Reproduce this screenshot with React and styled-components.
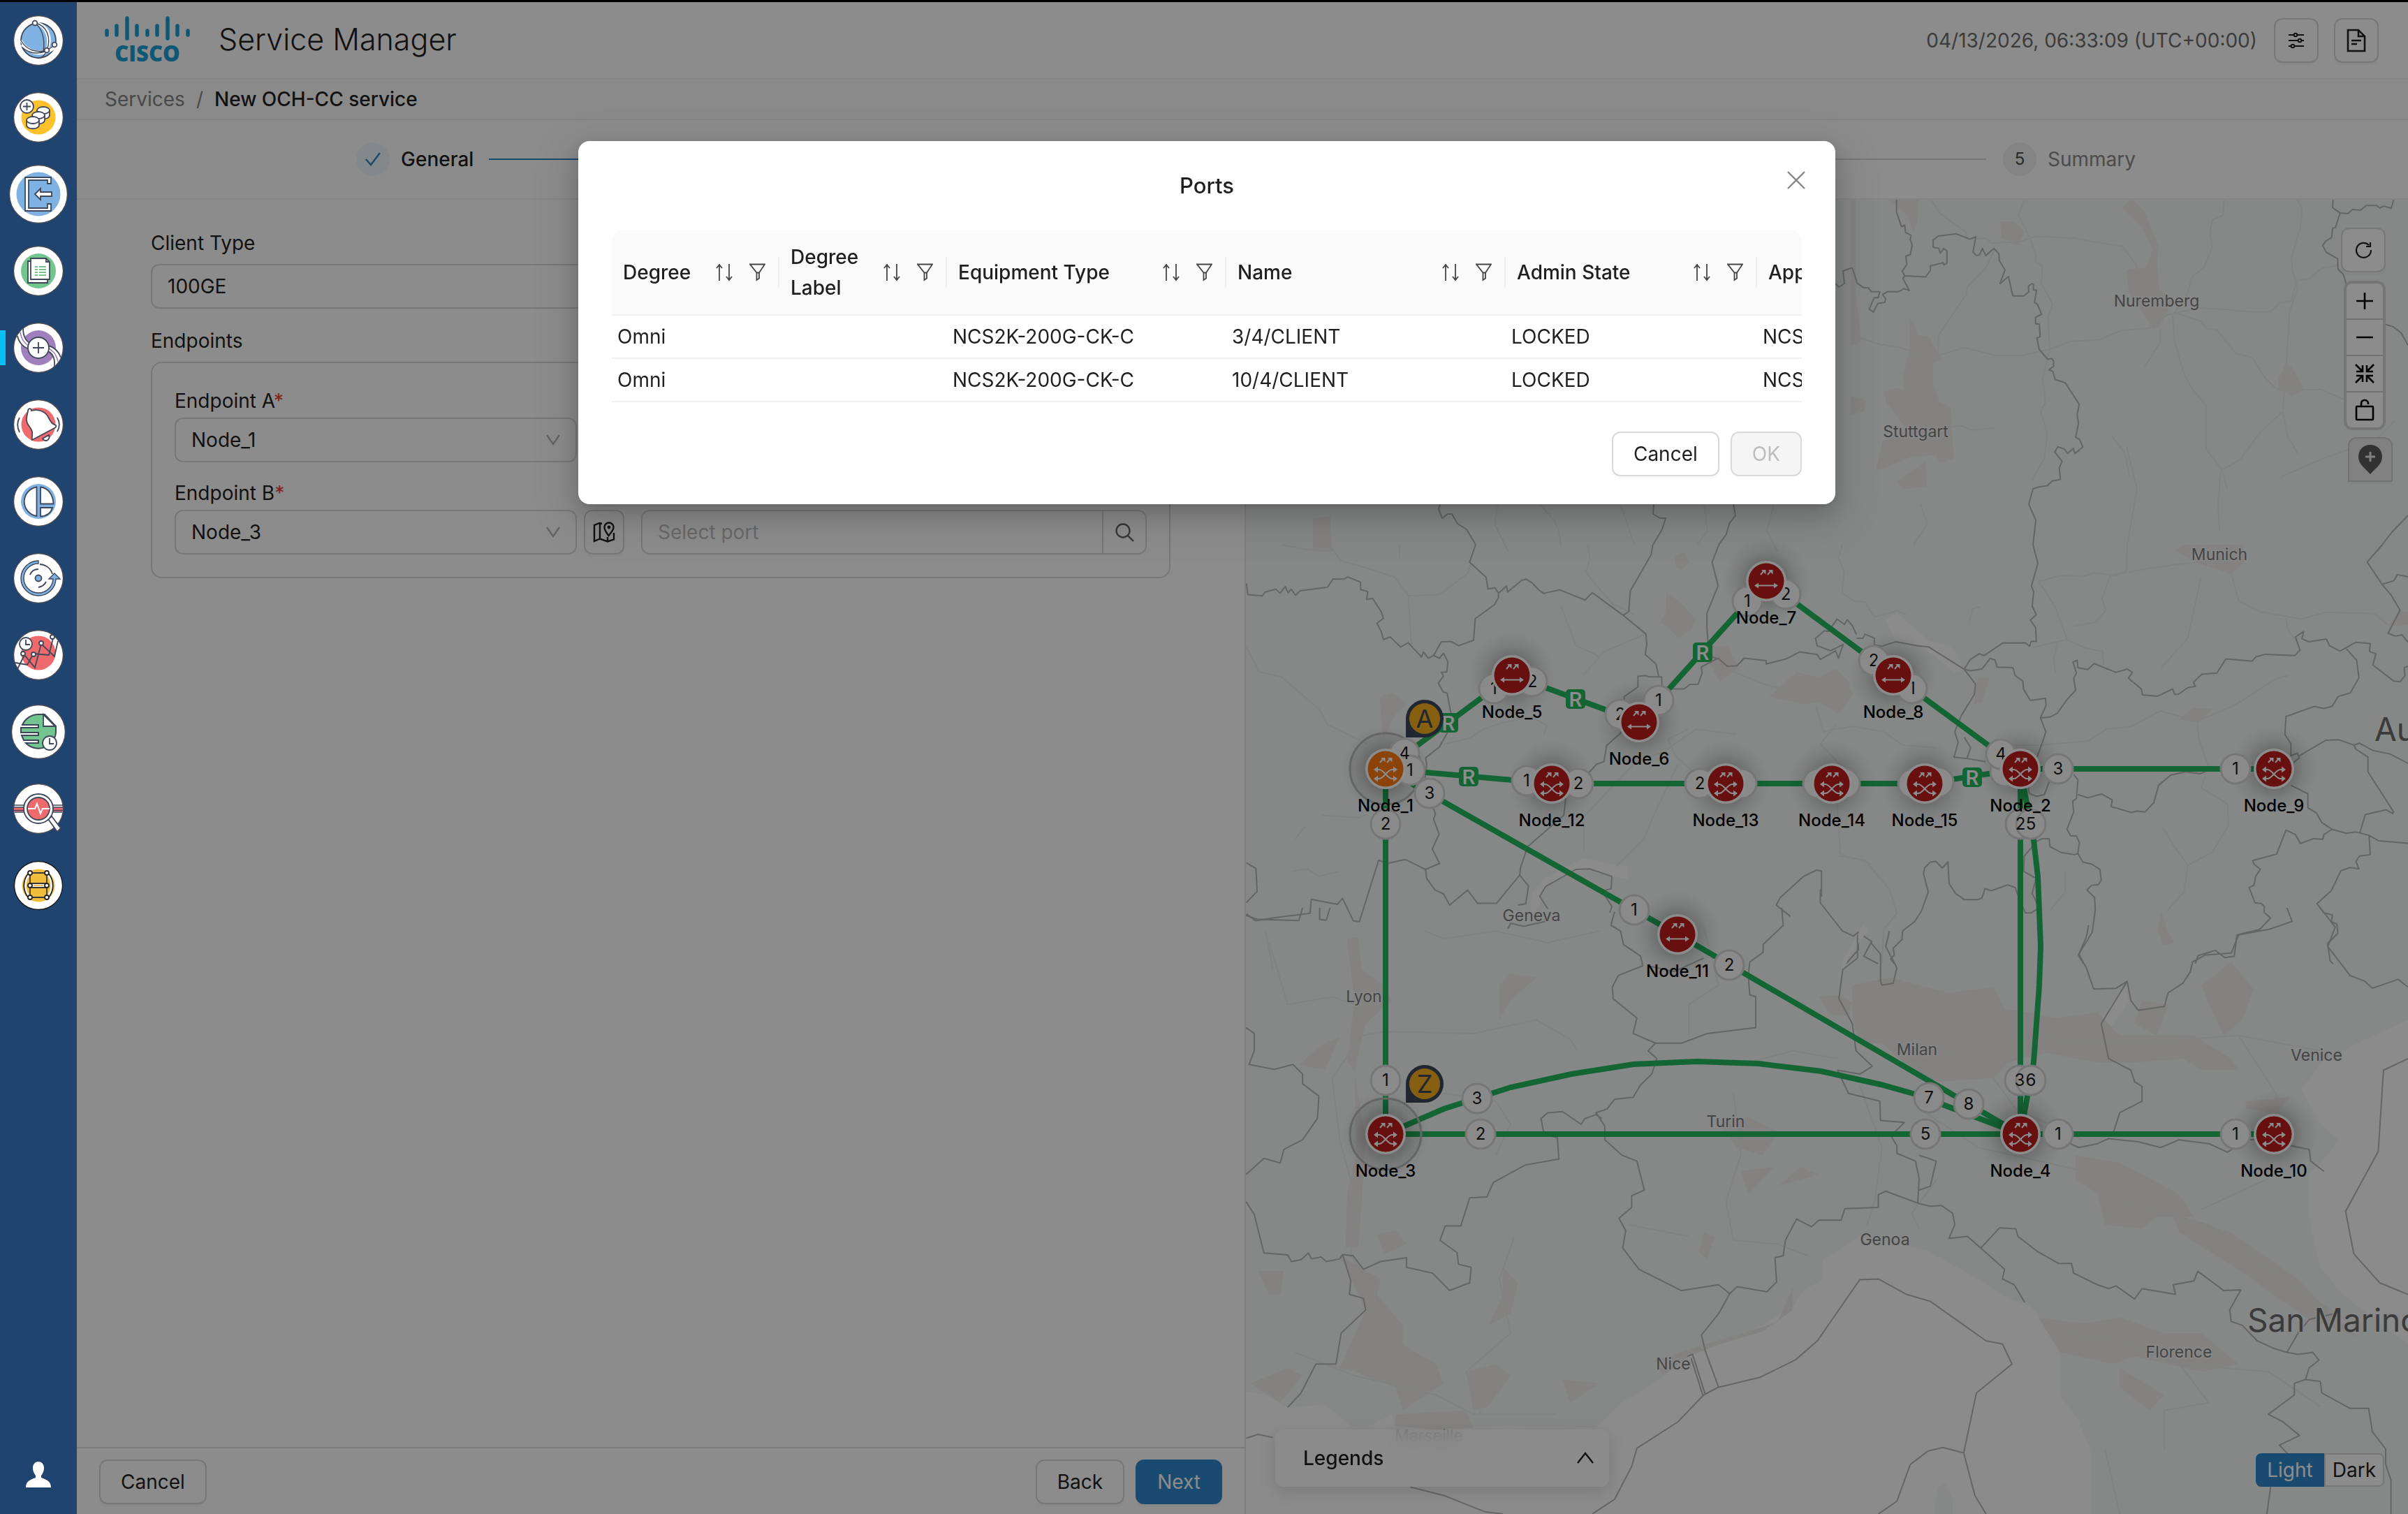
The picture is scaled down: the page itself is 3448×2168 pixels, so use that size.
import React from "react";
import styled, { createGlobalStyle } from "styled-components";

const FONT = `Inter, "Liberation Sans", sans-serif`;
const TEXT = "#1f1f1f";
const LINE = "#d9d9d9";
const BLUE = "#2f87cc";

const Global = createGlobalStyle`
  *, *::before, *::after { box-sizing: border-box; }
  body { margin: 0; background: #000; font-family: ${FONT}; font-size: 28px; line-height: 44px; color: ${TEXT}; }
  button, input, select { font: inherit; color: inherit; margin: 0; }
  svg { display: block; }
`;

/* ---------- page frame ---------- */
const Page = styled.div`
  display: flex;
  min-height: 100vh;
  border-top: 3px solid #000;
`;
const Sidebar = styled.nav`
  flex: 0 0 110px;
  display: flex;
  flex-direction: column;
  background: #1f4470;
`;
const NavItem = styled.a`
  display: flex;
  align-items: center;
  justify-content: center;
  height: 110px;
  background: linear-gradient(#08bff5, #08bff5) no-repeat left center / ${(p) => (p.$active ? "8px 50px" : "0 0")};
`;
const NavSpacer = styled.div`
  flex: 1;
`;
const UserLink = styled(NavItem)`
  height: 112px;
`;
const Main = styled.div`
  position: relative;
  flex: 1;
  min-width: 0;
  display: flex;
  flex-direction: column;
  background: #fff;
`;
const Mask = styled.div`
  position: absolute;
  inset: 0;
  background: rgba(0, 0, 0, 0.45);
`;

/* ---------- header ---------- */
const Header = styled.header`
  display: flex;
  align-items: center;
  height: 111px;
  padding: 0 42px 0 40px;
  border-bottom: 2px solid #f0f0f0;
`;
const Title = styled.h1`
  flex: 1;
  margin: 0 0 4px 40px;
  font-size: 43px;
  line-height: 56px;
  font-weight: 300;
`;
const Clock = styled.time`
  margin-right: 24px;
  color: #6e6e6e;
`;
const SquareButton = styled.button`
  display: flex;
  align-items: center;
  justify-content: center;
  flex: none;
  width: ${(p) => p.$width || 64}px;
  height: 64px;
  padding: 0;
  border: 2px solid ${LINE};
  border-radius: 12px;
  background: #fff;
  box-shadow: 0 4px 0 rgba(0, 0, 0, 0.02);
`;
const HeaderTools = styled.div`
  display: flex;
  gap: 22px;
`;
const Breadcrumb = styled.nav`
  display: flex;
  align-items: center;
  gap: 16px;
  height: 58px;
  padding: 0 40px;
  border-bottom: 2px solid #f0f0f0;
  background: #fcfcfc;
  color: #858585;
`;
const Crumb = styled.a`
  color: ${(p) => (p.$current ? TEXT : "#858585")};
  font-weight: ${(p) => (p.$current ? 500 : 400)};
  text-decoration: none;
`;

/* ---------- steps ---------- */
const Steps = styled.ol`
  display: flex;
  align-items: center;
  height: 114px;
  margin: 0;
  padding: 0 390px 0 400px;
  list-style: none;
  border-bottom: 2px solid #f0f0f0;
`;
const Step = styled.li`
  display: flex;
  align-items: center;
  gap: 16px;
  color: ${(p) => (p.$done ? TEXT : "#8a8a8a")};
  font-weight: ${(p) => (p.$done ? 500 : 400)};
`;
const StepMark = styled.span`
  display: flex;
  align-items: center;
  justify-content: center;
  width: 48px;
  height: 48px;
  border-radius: 50%;
  font-size: 24px;
  color: #4d4d4d;
  background: ${(p) => (p.$done ? "#eef7fb" : "#f0f0f0")};
`;
const StepLine = styled.li`
  flex: 1;
  height: 2px;
  margin: 0 ${(p) => (p.$done ? 0 : 24)}px 0 ${(p) => (p.$done ? 22 : 0)}px;
  background: ${(p) => (p.$done ? BLUE : LINE)};
`;

/* ---------- form column ---------- */
const Body = styled.div`
  flex: 1;
  display: flex;
`;
const FormColumn = styled.form`
  flex: 0 0 calc(50% + 5px);
  display: flex;
  flex-direction: column;
  border-right: 2px solid #e6e6e6;
`;
const Fields = styled.div`
  flex: 1;
  display: flex;
  flex-direction: column;
  gap: 24px;
  padding: 40px 106px;
`;
const Field = styled.div`
  display: flex;
  flex-direction: column;
  gap: ${(p) => p.$gap}px;
`;
const Required = styled.span`
  color: #e8453c;
`;
const Box = styled.div`
  display: flex;
  flex-direction: column;
  gap: 22px;
  padding: 32px;
  border: 2px solid ${LINE};
  border-radius: 16px;
`;
const EndpointRow = styled.div`
  display: flex;
  align-items: center;
`;
const SelectWrap = styled.div`
  position: relative;
  flex: 1 1 ${(p) => p.$basis || "auto"};
  max-width: ${(p) => p.$basis || "none"};
  margin-right: ${(p) => (p.$basis ? 10 : 0)}px;
`;
const Select = styled.select`
  appearance: none;
  display: block;
  width: 100%;
  height: 64px;
  padding: 0 60px 0 22px;
  border: 2px solid ${LINE};
  border-radius: 12px;
  background: #fff;
`;
const SelectArrow = styled.svg`
  position: absolute;
  right: 24px;
  top: 24px;
  pointer-events: none;
`;
const Search = styled.div`
  flex: 1;
  display: flex;
  height: 64px;
  margin-left: 24px;
  border: 2px solid ${LINE};
  border-radius: 12px;
`;
const SearchInput = styled.input`
  flex: 1;
  min-width: 0;
  padding: 0 22px;
  border: 0;
  background: transparent;
  &::placeholder { color: #bfbfbf; opacity: 1; }
`;
const SearchButton = styled.button`
  display: flex;
  align-items: center;
  justify-content: center;
  width: 62px;
  padding: 0;
  border: 0;
  border-left: 2px solid ${LINE};
  background: transparent;
`;
const FormFooter = styled.footer`
  display: flex;
  gap: 16px;
  height: 96px;
  padding: 16px 32px 0;
  border-top: 2px solid #e0e0e0;
`;
const FooterGap = styled.div`
  flex: 1;
`;
const Button = styled.button`
  height: 64px;
  padding: 0 29px;
  border: 2px solid ${(p) => (p.$primary ? BLUE : LINE)};
  border-radius: 12px;
  background: ${(p) => (p.$primary ? BLUE : "#fff")};
  color: ${(p) => (p.$primary ? "#fff" : TEXT)};
  box-shadow: 0 4px 0 rgba(0, 0, 0, 0.02);
  &:disabled { background: #f5f5f5; color: #bdbdbd; box-shadow: none; }
`;

/* ---------- map ---------- */
const MapArea = styled.section`
  position: relative;
  flex: 1;
  overflow: hidden;
  background: #f4f7f6;
`;
const MapCanvas = styled.svg`
  position: absolute;
  inset: 0;
  width: 100%;
  height: 100%;
  font-family: ${FONT};
`;
const MapTools = styled.div`
  position: absolute;
  top: 40px;
  right: 22px;
  display: flex;
  flex-direction: column;
  align-items: flex-end;
`;
const ToolRow = styled.div`
  padding-right: 10px;
`;
const ToolGroup = styled.div`
  display: flex;
  flex-direction: column;
  gap: 2px;
  margin: 12px 10px 10px 0;
  border: 4px solid #d6d6d6;
  border-radius: 12px;
  background: #d0d0d0;
  overflow: hidden;
`;
const ToolButton = styled.button`
  display: flex;
  align-items: center;
  justify-content: center;
  width: 52px;
  height: 50px;
  padding: 0;
  border: 0;
  background: #fff;
`;
const PinButton = styled(SquareButton)`
  background: #ececec;
  border-radius: 12px 12px 0 0;
  border-color: #cfcfcf;
`;
const Legend = styled.button`
  position: absolute;
  left: 42px;
  bottom: 39px;
  display: flex;
  align-items: center;
  justify-content: space-between;
  width: 478px;
  height: 82px;
  padding: 0 22px 0 40px;
  border: 0;
  border-radius: 12px;
  font-weight: 500;
  background: rgba(255, 255, 255, 0.6);
  backdrop-filter: blur(14px);
  box-shadow: 0 6px 24px rgba(0, 0, 0, 0.14);
`;
const ThemeSwitch = styled.div`
  position: absolute;
  right: 34px;
  bottom: 39px;
  display: flex;
`;
const ThemeButton = styled.button`
  height: 48px;
  padding: 0 ${(p) => (p.$on ? 14 : 10)}px;
  border: 2px solid ${(p) => (p.$on ? BLUE : LINE)};
  border-radius: ${(p) => (p.$on ? "8px 0 0 8px" : "0 8px 8px 0")};
  background: ${(p) => (p.$on ? BLUE : "#fff")};
  color: ${(p) => (p.$on ? "#fff" : TEXT)};
  line-height: 40px;
`;

/* ---------- dialog ---------- */
const ModalLayer = styled.div`
  position: fixed;
  inset: 0;
  display: flex;
  align-items: flex-start;
  justify-content: center;
  padding: 202px 0 0 8px;
`;
const Modal = styled.section`
  position: relative;
  width: 1800px;
  padding: 36px 48px 40px;
  border-radius: 16px;
  background: #fff;
  box-shadow: 0 12px 32px rgba(0, 0, 0, 0.16), 0 6px 12px -8px rgba(0, 0, 0, 0.24), 0 18px 56px 16px rgba(0, 0, 0, 0.1);
`;
const ModalTitle = styled.h2`
  margin: 6px 0 42px;
  font-size: 31px;
  line-height: 44px;
  font-weight: 500;
  text-align: center;
`;
const CloseButton = styled.button`
  position: absolute;
  top: 24px;
  right: 24px;
  display: flex;
  align-items: center;
  justify-content: center;
  width: 64px;
  height: 64px;
  padding: 0;
  border: 0;
  background: none;
`;
const TableWrap = styled.div`
  overflow: hidden;
  border-radius: 16px 16px 0 0;
`;
const Table = styled.table`
  width: 1900px;
  table-layout: fixed;
  border-collapse: separate;
  border-spacing: 0;
`;
const Th = styled.th`
  width: ${(p) => p.$width}px;
  height: 122px;
  padding: 0;
  border-bottom: 2px solid #f0f0f0;
  background: #fafafa;
  font-weight: 500;
  text-align: left;
`;
const HeadCell = styled.div`
  display: flex;
  align-items: center;
  justify-content: space-between;
  padding: 0 20px 0 16px;
  background: linear-gradient(#eeeeee, #eeeeee) no-repeat right center / 2px 44px;
`;
const HeadTools = styled.span`
  display: flex;
  gap: 24px;
`;
const IconButton = styled.button`
  padding: 0;
  border: 0;
  background: none;
`;
const Td = styled.td`
  height: 62px;
  padding: 0 8px;
  border-bottom: 2px solid #f0f0f0;
`;
const ModalFooter = styled.div`
  display: flex;
  justify-content: flex-end;
  gap: 16px;
  margin-top: 42px;
`;

/* ---------- icons ---------- */
const S = "#3f4759";
const Disc = ({ r = 36, fill = "#fff", stroke = "#4b4b55", children }) => (
  <svg width={r * 2 + 2} height={r * 2 + 2} viewBox={`${36 - r - 1} ${36 - r - 1} ${r * 2 + 2} ${r * 2 + 2}`} fill="none" stroke={S} strokeWidth="1.8" overflow="visible">
    <circle cx="36" cy="36" r={r - 0.5} fill={fill} stroke={stroke} strokeWidth="1.4" />
    {children}
  </svg>
);
const Globe = () => (
  <Disc>
    <circle cx="36" cy="36" r="25" fill="#7fb2e2" />
    <path d="M31 11C46 14 54 32 48 50M31 11C50 12 57 34 48 50M11 36c8 14 22 19 36 14 6-2 10-4 12-7M12 42c10 12 24 15 35 11 7-2 12-6 13-8" stroke="#fff" strokeWidth="3.4" />
    <path d="M31 11C48 14 55 32 48 50 45 58 41 60 38 61M31 11C41 18 46 34 43 52M11 36c8 14 22 18 37 14l11-7M13 46c10 9 22 10 35 5" strokeWidth="1.4" />
    <circle cx="31" cy="11" r="3.4" fill="#fff" /><circle cx="59" cy="42" r="3.4" fill="#fff" /><circle cx="48" cy="50" r="3.4" fill="#fff" />
  </Disc>
);
const Coins = () => (
  <Disc>
    <circle cx="36" cy="36" r="24.5" fill="#fdc12b" stroke="none" />
    {[[43, 26], [36, 33], [28, 40]].map(([x, y]) => (
      <g key={x} fill="#fff"><path d={`M${x - 9} ${y}v7c0 7 18 7 18 0v-7`} /><ellipse cx={x} cy={y} rx="9" ry="5" /></g>
    ))}
    <circle cx="19.500" cy="20.500" r="9.500" fill="#fff" /><path d="M19.500 15v11M14 20.500h11" />
  </Disc>
);
const Login = () => (
  <Disc r={42}>
    <circle cx="36" cy="36" r="31.500" fill="#7fb2e2" stroke="none" />
    <path d="M17 12h37v9h-5v-5H22v40h27v-6h5v10H17z" fill="#fff" /><path d="M31 36l8-8v5h16v6H39v5z" fill="#fff" />
  </Disc>
);
const Docs = () => (
  <Disc>
    <circle cx="36" cy="36" r="25" fill="#74c48f" stroke="none" />
    <path d="M21 22h28v31H21z" fill="#fff" /><path d="M25 18h22l5 5v25H25z" fill="#fff" /><path d="M47 18v5h5" />
    <path d="M31 30h4M37 30h10M31 34h4M37 34h10M31 38h4M37 38h10M31 42h4M37 42h10" stroke="#74c48f" strokeWidth="2.200" />
  </Disc>
);
const Service = () => (
  <Disc>
    <circle cx="36" cy="36" r="25" fill="#9f80bd" stroke="none" />
    <path d="M6 19C8 29 15 36 24 38L27 30C19 29 14 20 14 8ZM48 33C59 34 66 43 68 50L59 63C60 50 56 42 46 40Z" fill="#fff" stroke="none" />
    <path d="M6 19C8 29 15 36 24 38M27 30C19 29 14 20 14 8M48 33C59 34 66 43 68 50M59 63C60 50 56 42 46 40" />
    <path d="M10 14C12 25 18 32 25 34M47 36C57 38 62 47 64 56" stroke="#9f80bd" strokeWidth="1.600" />
    <circle cx="36" cy="36" r="15" fill="#fff" /><path d="M36 28v16M28 36h16" />
  </Disc>
);
const Bell = () => (
  <Disc>
    <circle cx="36" cy="36" r="24.500" fill="#ef6a6c" stroke="none" />
    <path d="M21 17c0-5 5-5 5-1 12-3 21 2 25 11 3 6 5 8 10 10 1 2 0 3-2 4L27 58c-1-3 1-7 0-12-1-6-8-9-8-17 0-5 1-8 2-12z" fill="#fff" />
    <path d="M42 56l9-5c2 3-1 8-4 8-2 0-4-1-5-3z" fill="#fff" /><path d="M9 26c-4 7-4 13 0 21M63 26c4 7 4 13 0 20" />
  </Disc>
);
const Pie = () => (
  <Disc>
    <circle cx="36" cy="36" r="25" fill="#7fb2e2" stroke="none" />
    <path d="M33.500 15.500a21 21 0 0 0 0 41.500zM39 15.500c10 1 18 10 18.500 24H39zM39 45h17c-2 7-8 12-17 12.500z" fill="#fff" />
  </Disc>
);
const Disk = () => (
  <Disc>
    <path d="M36 11a25 25 0 1 0 25 26h6l-8-8-8 8h6a21 21 0 1 1-21-22z" fill="#7fb2e2" strokeWidth="1.400" />
    <circle cx="36" cy="36" r="4.500" fill="#7fb2e2" /><path d="M24 31c2-5 6-8 12-8M36 49c6-1 9-4 11-8M38 16c10 1 16 7 18 14" />
  </Disc>
);
const Trend = () => (
  <Disc>
    <circle cx="36" cy="33" r="24.500" fill="#ef6a6c" stroke="none" />
    <path d="M3 47l17 3 9-16 22 2L57 12M6 56l10-20 15 18 9-34 19 18 5-22" />
    <circle cx="14" cy="34" r="3" fill="#fff" /><circle cx="29" cy="35" r="3" fill="#fff" /><circle cx="40" cy="19" r="3" fill="#fff" /><circle cx="56" cy="10" r="3" fill="#fff" />
    <circle cx="18" cy="20" r="9" fill="#fff" /><path d="M18 14v7h6" />
  </Disc>
);
const Report = () => (
  <Disc r={39}>
    <path d="M45 11H36A25 25 0 0 0 13 26h23v4H11v7h25v4H12l3 7h21v4H18a25 25 0 0 0 43-15v-9L45 11z" fill="#74c48f" strokeWidth="2" />
    <path d="M43 11v17h17z" fill="#fff" /><circle cx="52" cy="52" r="10" fill="#fff" /><path d="M52 45v8h6" />
  </Disc>
);
const Inspect = () => (
  <Disc>
    <path d="M1 34h70v6H1z" fill="#ef6a6c" stroke="none" /><path d="M1 31h70M1 34h70M1 38.500h70M2 41h68" strokeWidth="1.400" />
    <path d="M50 51l5-4 13 17-5 5z" fill="#fff" /><circle cx="36" cy="36" r="21" fill="#fff" /><circle cx="36" cy="36" r="16" fill="#ef6a6c" />
    <path d="M21 36h10l3-7 5 14 3-7h10" stroke="#fff" strokeWidth="2" />
  </Disc>
);
const Grid = () => (
  <Disc r={35} stroke="#1b1b1b">
    <circle cx="36" cy="36" r="23.500" fill="#f0be3a" stroke="none" />
    <path d="M24 18c-10 10-10 26 0 36M48 18c10 10 10 26 0 36" stroke="#fff" strokeWidth="4" /><path d="M22 18c-9 11-9 25 0 36M50 18c9 11 9 25 0 36" stroke="#222" />
    <path d="M24 33.500h24v5H24z" fill="#fff" stroke="none" /><path d="M24 18h24v35H24zM24 33h24M24 39h24" stroke="#3a3a3a" /><path d="M29 36h14" stroke="#f0be3a" />
    {[18, 36, 53].map((y) => <g key={y} fill="#fff" stroke="#222"><circle cx="24" cy={y} r="3" /><circle cx="48" cy={y} r="3" /></g>)}
  </Disc>
);
const NAV = [
  ["Network", Globe], ["Inventory", Coins], ["Node access", Login], ["Documents", Docs], ["Services", Service], ["Alarms", Bell],
  ["Partitions", Pie], ["Software", Disk], ["Performance", Trend], ["Reports", Report], ["Diagnostics", Inspect], ["Topology", Grid],
];

const BARS = [[3, 18, 29], [17, 11, 29], [32, 0, 34], [46, 11, 29], [61, 18, 29], [75, 11, 29], [90, 0, 34], [104, 11, 29], [119, 18, 29]];
const Logo = () => (
  <svg width="123" height="78" viewBox="0 -4 123 78" role="img" aria-label="Cisco">
    <g stroke="#1ba0d7" strokeWidth="5.500" strokeLinecap="round">
      {BARS.map(([x, a, b]) => <path key={x} d={`M${x} ${a + 3}V${b - 2}`} />)}
    </g>
    <text x="61" y="65" textAnchor="middle" fontFamily="Open Sans, Noto Sans, sans-serif" fontSize="31" fontWeight="800" fill="#1ba0d7">CISCO</text>
  </svg>
);
const ArrowDown = () => (
  <SelectArrow width="20" height="16" viewBox="0 0 20 16" fill="none" stroke="#b5b5b5" strokeWidth="2.400"><path d="M1 1l9 13 9-13" /></SelectArrow>
);
const MapPin = () => (
  <svg width="32" height="32" viewBox="0 0 32 32" fill="none" stroke="#1f1f1f" strokeWidth="2.400">
    <path d="M13 4L9.500 3 2 6v23l8-3.500 11 4 9-3V17M10 3v22M21 23v6" /><path d="M22.500 21c-4-5-6-8-6-12a6 6 0 0 1 13 0c0 4-3 7-7 12z" /><circle cx="23" cy="9" r="1.200" />
  </svg>
);
const Magnifier = () => (
  <svg width="28" height="28" viewBox="0 0 28 28" fill="none" stroke="#666" strokeWidth="2.400"><circle cx="12" cy="12" r="9.500" /><path d="M19 19l8 8" /></svg>
);
const SortIcon = () => (
  <svg width="24" height="26" viewBox="0 0 24 26" fill="none" stroke="#444" strokeWidth="1.800"><path d="M5 25V2M1 7l4-5 4 5M19 1v23M15 19l4 5 4-5" /></svg>
);
const FilterIcon = () => (
  <svg width="23" height="26" viewBox="0 0 23 26" fill="none" stroke="#444" strokeWidth="1.800"><path d="M1 1.500h21l-8 12v8L10.500 24V13.500zM10 13.500h4" /></svg>
);

/* ---------- base map drawing ---------- */
const TILES = [
  {
    at: "translate(0 0)",
    urban: "M1880 742L1905 740 1908 790 1880 790Z",
    roads: "M2145 722L2140 750 2160 790M2205 722L2225 745 2232 760 2235 780M2320 722L2330 750 2340 780M2440 722L2445 760 2430 780M2540 722L2530 760 2545 790M2750 722L2760 750 2740 780M3045 640L3060 700 3046 780M3180 673L3176 720 3178 760",
    border: "M2062 722L2060 729 2065 742 2073 736 2079 736 2087 750 2100 758 2113 780M2368 722L2367 736 2377 742 2385 742 2380 758 2367 780M2482 722L2485 738 2476 750 2472 765 2461 780M2911 700L2905 722 2915 745 2911 780M2628 406L2633 411 2641 406 2639 388 2650 384M3411 780L3425 762 3448 738",
  },
  {
    at: "translate(2650 0) scale(.50893 .44643)",
    urban: "M420 710L458 710 490 742 472 788 425 765ZM765 668L785 640 800 645 830 685 865 785 862 850 870 930 908 960 868 1050 850 1055 800 960 783 940 775 864 830 860 850 800 820 730ZM1238 1172L1278 1250 1240 1270 1202 1250 1203 1215 1220 1175ZM165 1020L180 1040 188 1075 220 1078 235 1110 258 1150 232 1165 232 1230 250 1290 282 1305 285 1370 290 1470 250 1485 240 1460 170 1465 100 1500 70 1510 90 1415 160 1380 100 1290 93 1255 130 1245 150 1250 147 1200 165 1130ZM105 640L190 640 188 710 175 745 160 690ZM0 640L15 640 15 940 30 1100 0 1110ZM130 1545L210 1480 213 1560 150 1568ZM0 1270L44 1285 38 1320 0 1330Z",
    roads: "M225 640L252 685 325 745 327 765 382 765 395 780 480 775 518 758 630 764 680 775 765 790 803 850 815 900M490 640L472 690 505 765 520 815 520 840 539 853 537 910 568 975 555 1020 560 1120M403 805L380 860 328 920 325 945 247 1075 246 1125M0 1075L85 1105 140 1115 200 1140M246 1140L320 1115 408 1140 482 1140 560 1120 620 1095 700 1090 760 1060 840 1053 890 1010 980 988 1065 993 1120 1000 1180 1000 1210 970 1240 965 1255 900 1290 895 1325 860 1370 852M1257 640L1270 670 1265 730 1240 825 1243 865 1257 925 1235 1000 1225 1180 1215 1320M905 1010L912 1100 938 1200 962 1250 1000 1300 1000 1440 1045 1508 1060 1568M910 1003L985 1030 1003 1055 1030 1057 1083 1133 1130 1147 1165 1210 1200 1250 1325 1250 1390 1282M1050 640L1048 690 1018 705 1010 750 1018 790 995 855 960 890 945 950 910 1003M1045 1508L1095 1475 1150 1390 1215 1320 1230 1400 1258 1455M560 1120L540 1215 548 1290 535 1320 553 1390 545 1470 510 1540M1210 1530L1330 1470 1480 1410 1530 1350M240 1375L310 1365 340 1380 405 1372M735 1400L770 1450 785 1530M870 1060L870 1100 825 1180",
    border: "M129 640L129 680 143 727 152 722 154 745 170 755 167 768 173 785 168 816 155 822 158 848 145 870 152 885 211 888 224 868 224 853 260 843 262 850 271 844 271 805 262 797 252 812 248 797 232 793 232 770 246 757 297 750 335 767 352 760 344 808 353 819 362 818 371 797 380 820 403 797 417 814 418 835 434 866 420 910 444 887 456 949 487 949 501 936 500 918 509 910 514 912 514 930 523 930 517 970 525 975 537 1008 520 1018 520 1038 531 1040 533 1080 524 1084 530 1120 554 1152 566 1150 571 1158 571 1175 558 1186 569 1192 575 1217 604 1228 643 1297 637 1330 641 1358 633 1402 645 1411 653 1434 631 1455 626 1438 610 1455 601 1440 583 1433 574 1450 595 1480 587 1500 590 1538 567 1543 553 1558 530 1562 512 1568M0 860L5 860 18 908 36 923 50 923 58 936 82 936 77 955 66 955 52 992 64 1001 76 974 96 970 98 958 90 945 104 935 134 936 150 926 165 932 147 893 152 885M1357 640L1356 666 1377 683 1399 685 1412 672 1435 674 1451 659 1480 659 1488 667 1500 661 1521 668 1528 640M1377 683L1364 730 1356 732 1353 762 1337 773 1328 787 1338 809 1370 830 1371 863 1386 880 1396 918M1497 1050L1503 1040 1526 1048 1549 1068 1568 1108",
  },
  {
    at: "translate(1780 780) scale(.57398 .35714)",
    water: "M715 1500L720 1400 750 1340 850 1255 900 1275 955 1290 962 1340 920 1330 865 1302 810 1320 760 1360 742 1400 740 1450Z",
    urban: "M1075 50L1100 30 1112 70 1095 105 1080 90ZM1055 190L1090 230 1130 300 1115 345 1085 375 1060 330 1040 310 1055 270ZM1165 480L1170 405 1210 405 1220 450 1240 490 1190 550ZM1312 610L1380 510 1440 535 1480 500 1515 555 1500 620 1450 625 1400 640ZM340 610L375 595 410 640 380 680 350 780 345 700Z",
    roads: "M95 0L160 20 220 12 245 65 290 85 350 115 378 130 412 205 490 200 560 115 568 80M390 0L390 60M412 205L420 400M8 410L40 510 95 530 190 660 210 720 310 800M860 0L865 60 855 110 875 150 920 235 975 280M500 800L565 775 600 740 645 715 720 690 757 725 750 760M850 1225L850 1130 845 1100 880 1040 980 870 1050 830 1130 740 1230 760M1110 740L1060 780 1080 850 1130 920M1210 500L1300 560 1380 590M1480 720L1440 800 1500 900 1480 1000 1490 1240 1568 1280M793 245L830 405 880 440 890 460M1085 880L1020 1100 1000 1180 930 1290M195 1085L290 1095 310 1080M130 1180L155 1130M120 1310L160 1300 190 1330 240 1310M1000 360L900 430 850 520",
    border: "M580 0L565 70 606 130 611 178 628 172 637 195 637 212 627 240 579 297 575 383 538 405 519 388 494 390 475 445 462 455 450 430 445 450 412 393 393 410 367 370 350 380 345 350 334 315 350 295 345 270 323 215 308 220 311 188 293 180 293 150 261 129 251 138 224 138 211 170 142 185 131 203 120 178 112 193 105 168 92 195 82 178 55 190 48 205 12 200 8 155M637 195L657 165 660 190 695 143 706 138 720 152 738 182 750 195 790 181 853 222 871 192 948 283 962 268 966 185 1018 40 1022 0M948 283L1005 358 1007 400 1003 440 1030 478 1037 530M475 445L490 455 500 435 511 470 508 510 495 512 500 527 487 555 499 590 509 595 520 690 511 750 490 810 455 855 458 880 452 960 480 1080 475 1100 489 1160 472 1220 490 1278 455 1302 404 1262 360 1278 338 1265 290 1512 275 1508 248 1418 235 1442 170 1422 167 1478 80 1495 32 1508 8 1480M455 1302L458 1338 479 1385 500 1400 515 1445 560 1385 585 1438 632 1438 690 1325 712 1368 705 1440 685 1445M690 1325L692 1295 710 1210 800 1085 806 1000 865 910 882 880 900 870 907 805 942 755 960 715M955 650L950 610 985 570 985 528 1003 525 1014 530 1044 530 1045 570 1072 578 1100 578 1115 560 1135 560 1145 515 1143 490 1185 455 1208 488 1232 485 1250 455 1305 465 1305 478 1355 458 1388 430 1432 440 1440 460 1478 425 1485 455 1497 400 1465 425 1432 405 1428 375 1450 345 1460 348 1482 298 1500 320 1507 300 1520 325 1530 360M1187 0L1170 70 1185 165 1157 275 1157 330 1160 400 1153 440 1180 455M660 1540L668 1518 700 1530 755 1510M760 1460L740 1410 755 1370 830 1302 865 1300 920 1330 918 1380 895 1388 920 1450 915 1475M8 1275L32 1298 35 1390 8 1435M1365 1490L1330 1445 1340 1415 1398 1330 1430 1305 1443 1308 1443 1412",
  },
  {
    at: "translate(2600 780) scale(.54082 .38265)",
    water: "M185 280L215 255 250 300 300 360 355 378 375 410 390 470 365 480 320 420 260 370 210 355Z",
    urban: "M950 20L975 0 1130 0 1140 60 1100 110 1060 90 1010 70ZM0 510L45 465 75 500 100 560 60 635 0 580ZM960 655L1000 610 1052 615 1015 665ZM915 1370L930 1440 950 1490 920 1500 905 1440ZM1515 305L1545 250 1568 250 1568 300ZM430 500L460 495 440 590 418 600Z",
    roads: "M70 0L60 50 75 100 70 180 100 210 130 215 155 270 215 248 240 262M590 138L650 115 710 118 740 105 790 115 855 95 950 75 1010 65M590 138L635 235 665 355 575 385M665 355L710 385 760 400 762 450M825 0L822 100 780 115 758 200 768 245 740 290 685 305M1100 110L1120 210 1175 250 1285 278 1350 253 1480 258 1515 300M1245 275L1250 320 1275 360M1020 120L985 350 915 460M470 750L590 750 720 735 770 690 835 680 912 622 1010 660 1110 600 1220 500 1250 490M1010 660L1015 730 1040 830 1020 910 1090 970 1093 1050 1050 1150 985 1200 975 1300 930 1370M985 1200L945 1120 920 1060M0 600L20 700 50 690 100 680 180 700 230 750 320 760M60 1165L130 1180 195 1290 215 1380 180 1440 175 1568M660 1220L660 1300 620 1370M435 232L415 240 405 300M640 365L630 430 635 480",
    border: "M575 0L588 70 571 155 577 175 573 230 584 262 568 282 582 310 584 362 570 362 566 380 555 367 495 368 445 415 433 408 410 428 393 466 410 472 440 465 462 425 475 432 480 458 522 460 528 490 548 510 550 540 568 583 608 575 610 600 595 648 609 700 600 740 586 795M595 648L620 645 640 630 665 580 688 545 683 500 690 480 681 440 692 432 694 460 720 467 737 445 795 478 825 465 838 478 828 500 862 540 865 562 905 567 945 540 950 560 960 560 985 535 1005 530 1000 515 1022 485 1062 480 1086 427 1155 436 1165 420 1190 410 1268 415 1282 395 1270 345 1292 325 1287 352 1305 363 1352 353 1360 378 1388 398 1430 365 1468 370 1466 400 1483 408 1475 450 1530 510 1547 513 1560 490 1558 460 1568 455M1500 0L1460 65 1500 150 1523 188 1547 245 1515 332 1535 342 1552 337 1568 365M1500 148L1530 135 1540 112 1568 120M1405 390L1432 432 1438 498 1415 555 1383 568 1367 605 1345 613 1320 605 1245 643 1242 710 1258 745 1258 790 1275 780 1280 798 1265 815M1280 790L1350 732 1385 730 1425 750 1430 765 1462 795 1462 850 1530 1000 1527 1006 1510 992 1455 1010 1440 1080M1425 750L1440 743 1475 770 1520 783 1568 818M1258 900L1303 932 1303 985 1325 1003 1340 1040 1367 1065 1405 1080 1430 1075 1465 1088 1490 1108 1568 1117M1367 1065L1345 1085 1343 1102 1318 1100 1283 1118 1270 1085 1245 1068 1220 1158 1157 1182 1160 1195 1177 1215 1165 1240 1160 1275 1147 1283 1163 1340 1180 1343 1188 1355 1187 1375 1204 1397 1175 1440 1115 1460 1108 1540 1083 1545 1058 1518 1012 1538 1005 1568M1465 1088L1468 1160 1440 1165 1430 1185 1438 1213 1415 1208 1390 1220 1365 1295 1327 1343 1345 1378 1368 1385 1365 1410 1380 1420 1382 1455 1355 1492 1362 1558 1370 1568M694 935L720 947 757 933 785 955 782 980 795 985 835 1002 850 997 872 1000 895 965 908 900 940 862 980 850 1018 857 1030 850 1035 835M683 860L694 880 690 950 680 960 683 1000 665 1065 675 1090 690 1090 698 1115 694 1155 685 1160 650 1152 620 1130 618 1100 600 1100 585 1110 552 1165 550 1222 583 1248 573 1305 582 1330 590 1360 570 1378 555 1378 535 1312 528 1283 508 1273 465 1295 448 1287 440 1322 430 1328 393 1328 370 1305 353 1268 350 1187 335 1210 318 1185 303 1188 288 1210 285 1230 298 1300 280 1370 262 1410 230 1445 228 1478 205 1510 208 1535 198 1550 208 1568M694 1155L707 1188 730 1195 752 1215 756 1255 748 1272 730 1275 718 1292 738 1320 740 1365 732 1450 695 1535 709 1568M393 466L423 522 420 560 385 640 368 700 377 740 366 795 400 800 450 812M393 720L410 760 400 800M393 466L298 382 268 378 212 363 175 380 155 375 155 350 130 335 125 350 108 350M560 880L565 930 583 942 605 935 620 880M12 1290L12 1340 70 1445 100 1465 112 1450 148 1485 127 1540 165 1568M112 1450L113 1515 80 1568",
  },
  {
    at: "translate(1780 1300) scale(1.06378 .55357)",
    water: "M0 1250L30 1260 60 1292 110 1285 145 1340 165 1345 200 1310 205 1345 360 1340 475 1345 510 1280 545 1240 560 1220 600 1160 640 1130 690 1090 740 1030 755 990 780 960 780 910 830 850 880 865 920 885 980 950 1030 1010 1060 1030 1085 1090 1100 1160 1100 1260 1125 1330 1140 1400 1140 1568 0 1568ZM1568 290L1500 350 1450 400 1425 470 1450 560 1475 600 1455 650 1435 690 1435 800 1450 930 1480 1000 1520 1060 1568 1130ZM1188 195L1192 240 1160 330 1150 300ZM836 40L840 60 815 130 800 200 806 140Z",
    urban: "M820 200L870 180 950 220 1010 205 1025 260 1095 285 1150 270 1180 330 1280 330 1330 390 1340 420 1290 420 1265 390 1200 400 1150 400 1080 375 1030 400 1010 440 935 450 900 420 860 350 830 350 820 290ZM775 230L800 225 820 245 815 280 790 275ZM140 80L155 75 160 160 190 200 200 240 165 300 150 420 140 400 150 240ZM130 900L185 960 180 1000 215 1080 215 1130 260 1180 270 1230 215 1300 205 1240 150 1200 130 1190 165 1040ZM150 430L165 600 160 750 155 880 138 880 140 740 152 640ZM1120 640L1180 660 1260 740 1280 800 1230 800 1210 830 1160 820 1150 740 1120 700ZM1250 790L1330 840 1420 960 1460 1040 1500 1110 1430 1060 1350 950 1310 900 1260 840ZM1070 1060L1130 1075 1180 1060 1240 1100 1290 1100 1340 1180 1290 1200 1200 1160 1170 1180 1100 1150ZM1350 500L1410 490 1390 530 1350 520ZM1210 240L1245 250 1230 330 1200 300ZM1290 200L1330 140 1360 210 1345 290 1320 330 1300 250ZM110 350L130 335 110 420 75 405ZM350 930L370 970 360 1050 330 1080 350 1000ZM620 840L635 850 625 910 613 890ZM670 680L715 670 680 740ZM750 670L775 690 720 720ZM640 560L680 540 720 580 700 640 665 620 650 580ZM740 980L720 1070 690 1090 620 1130 555 1170 565 1210 600 1160 640 1130 700 1095 740 1040ZM430 1220L480 1230 440 1280ZM345 200L360 170 395 180 360 240 345 290ZM300 1200L340 1180 360 1210 330 1290 310 1300ZM180 845L205 835 220 870 190 895ZM1180 1190L1240 1260 1220 1300 1180 1240ZM20 940L55 940 50 1000 35 1000ZM10 1230L60 1190 80 1210 50 1280ZM205 1310L300 1300 310 1345 260 1350 205 1340Z",
    roads: "M35 90L60 250 120 230 150 250 160 330 190 320 310 325 395 290M245 60L270 80 340 60 410 90 480 60M160 330L120 440 130 600 150 740 145 900 180 1000 210 1200M395 290L440 340 450 370M620 50L640 200 600 250 600 330M680 400L740 370 800 390M660 480L670 640 650 760 660 860M660 860L720 870 760 900M830 460L860 620 850 760 840 820M910 520L990 620 1130 680 1180 760 1300 820M1030 400L1100 340 1200 350 1340 330 1450 370M1010 440L1040 520 1130 600M1340 330L1390 480 1400 600M1300 820L1400 960 1480 1060M365 850L345 960 360 1100 300 1200 320 1310M70 1150L150 1210 260 1260 310 1310 420 1310M1100 1100L1180 1120 1260 1180 1300 1280 1240 1300 1240 1400M1260 1180L1380 1200 1450 1290M1160 1400L1180 1568M910 830L900 790 935 700M270 480L340 500 360 560 340 640M520 820L600 850M1380 700L1290 780M30 60L40 160",
    border: "M4 20L20 30 75 33 80 0M103 0L103 30 112 32 117 0M4 310L15 325 15 370 8 405 42 418 67 405 80 430 80 455 102 487 100 545 80 600 55 625 50 660 28 648 4 690M4 760L15 793 28 893 60 898 65 915 78 910 88 893 92 908 105 903 112 915 130 908 134 897 148 900 162 935 185 915 220 905 220 930 255 945 278 990 305 970 307 930 290 922 288 892 265 860 272 823 293 823 305 750 328 748 337 710 380 665 425 650 423 595 405 585 401 545 410 530 430 527 455 560 460 545 475 535 483 545M134 897L145 965 143 1000 162 1010 165 1040 132 1100 125 1180 98 1180 78 1255 60 1292M555 350L545 370 557 390 550 430 535 458 525 490 500 495 490 520 475 530 487 565 487 600 510 640 530 655 540 730 523 745 523 775 506 803 515 835 511 880 533 935 590 990 640 975 655 998 665 980 705 993 718 968 716 905 727 900 730 860 745 805 765 825 775 808 805 808 810 778 855 775 855 742 865 733 910 765M500 10L495 45 508 60 512 95 535 125 538 150 505 175 497 205 498 235 530 285 525 325 555 350 590 350 625 325 690 310 690 230 682 225 680 175 682 140 700 115 700 95 727 45 725 0M545 150L580 165 620 130M827 130L807 160 802 235 820 300 825 370 847 410 830 430 800 420 815 480 857 500 858 550 890 555 872 590 880 615 880 635 905 655 910 700 908 765M827 70L827 130M845 90L858 120 858 190 860 200 875 195 880 155 865 100 870 60M910 640L933 655 925 720 910 730M910 765L925 772 940 770 955 790 958 820 950 855 975 850 993 880 1018 828 1040 830 1043 850 1070 890 1098 920 1115 920 1118 945 1150 975 1165 985 1175 978 1200 1012 1210 985 1255 1000 1252 975 1280 965 1285 940 1320 990 1343 988 1328 1040 1330 1070 1345 1080 1365 1120 1388 1140 1405 1150 1420 1155 1440 1150 1448 1170 1435 1190 1430 1220 1415 1230 1415 1260 1380 1310 1400 1330 1422 1365 1395 1390 1410 1420 1400 1440 1380 1455 1383 1500 1378 1568M993 880L1025 935 1022 960 1038 975 1052 1020M1430 1220L1450 1225 1452 1255 1490 1295 1515 1295 1520 1355 1538 1400 1538 1440 1545 1480 1545 1568M1405 1150L1420 1100 1435 1065 1468 1050M655 998L640 1050 617 1105 622 1145 640 1240 695 1215 743 1170 773 1120 830 962 855 960 893 1000 925 1018 1000 1120 1022 1128 1035 1180 987 1255 970 1410 942 1396 922 1405 898 1440 880 1535 855 1568M970 1410L985 1520 1000 1568M640 1240L620 1260 585 1330 530 1398 523 1445 500 1530 470 1568M598 1160L605 1155 622 1258M603 1165L619 1262M225 1498L270 1520 325 1562 350 1568M4 1372L20 1362 40 1370M1568 390L1535 420 1528 630 1484 785 1495 895 1530 970 1568 1000M1060 590L1090 590 1125 620 1150 610 1165 597 1205 605 1235 620 1260 600 1300 610 1325 632 1350 600 1400 598 1410 615 1435 625 1437 655 1455 682M1138 45L1135 75 1125 120 1135 155 1145 210 1175 208 1190 190 1195 240 1205 265 1240 255 1245 220 1265 195 1275 165 1278 140 1295 122 1330 117 1340 70 1382 55 1412 35 1405 0M1190 190L1155 300 1165 390 1195 420 1200 450 1210 462 1210 500 1180 530 1170 590M1450 0L1470 50 1460 100 1490 175 1510 190 1520 208 1555 185 1568 205",
    land: "M935 1500L945 1490 955 1530 955 1568 930 1568Z",
  },
];

const CITIES = [
  ["Nuremberg", 3088, 431], ["Stuttgart", 2743, 618], ["Munich", 3178, 794], ["Lyon", 1953, 1427], ["Geneva", 2193, 1311], ["Milan", 2745, 1503],
  ["Venice", 3317, 1511], ["Turin", 2471, 1606], ["Genoa", 2699, 1775], ["Nice", 2396, 1953], ["Florence", 3120, 1936], ["Marseille", 2046, 2056],
];

/* ---------- topology ---------- */
const NODES = [
  ["Node_1", 1984, 1101, "x", "#ff7a12"], ["Node_5", 2165, 967, "l"], ["Node_6", 2347, 1034, "l"], ["Node_7", 2529, 832, "l"], ["Node_8", 2711, 967, "l"],
  ["Node_12", 2222, 1122, "x"], ["Node_13", 2471, 1122, "x"], ["Node_14", 2623, 1122, "x"], ["Node_15", 2756, 1122, "x"], ["Node_2", 2893, 1101, "x"],
  ["Node_9", 3256, 1101, "x"], ["Node_11", 2402, 1338, "l"], ["Node_3", 1984, 1624, "x"], ["Node_4", 2893, 1624, "x"], ["Node_10", 3256, 1624, "x"],
];
const LINKS = [
  "M1984 1101L2165 967 2347 1034 2529 832 2711 967 2893 1101", "M1984 1101L2222 1122H2756L2893 1101H3256", "M1984 1101V1624H3256", "M2893 1101V1624",
  "M2893 1101L2912 1203 2918 1255 2922 1355 2920 1411 2912 1521 2893 1624", "M1984 1101L2402 1338 2893 1624",
  "M1984 1624L2067 1588 2163 1557 2250 1538 2339 1524 2429 1520 2518 1523 2608 1534 2693 1553 2743 1567 2893 1624",
];
const PORTS = [
  [2011, 1079, 4], [2019, 1103, 1], [2047, 1136, 3], [1984, 1180, 2], [2139, 986, 1], [2194, 976, 2], [2320, 1023, 2], [2375, 1003, 1], [2502, 861, 1], [2557, 851, 2],
  [2186, 1118, 1], [2260, 1122, 2], [2434, 1122, 2], [2494, 1122, ""], [2603, 1122, ""], [2642, 1122, ""], [2739, 1122, ""], [2776, 1120, ""], [2871, 1105, ""],
  [2865, 1080, 4], [2947, 1101, 3], [2893, 1180, 2], [2908, 1180, 5], [2683, 946, 2], [2738, 986, 1], [3201, 1101, 1], [2340, 1303, 1], [2476, 1382, 2],
  [1984, 1547, 1], [2115, 1573, 3], [2120, 1624, 2], [2762, 1572, 7], [2819, 1581, 8], [2757, 1624, 5], [2947, 1624, 1], [2892, 1547, 3], [2908, 1547, 6], [3201, 1624, 1],
];
const REGENS = [[2074, 1035], [2256, 1001], [2438, 934], [2103, 1112], [2824, 1113]];
const ENDS = [["A", 2040, 1029], ["Z", 2040, 1552]];

const NodeGlyph = ({ kind }) => (
  <g fill="none" stroke="#fff" strokeWidth="2">
    <path d="M-8-9l5-6M2-9l5-6" />
    <path d="M-7-16h6.500v6.500zM3-16h6.500v6.500z" fill="#fff" stroke="none" />
    {kind === "l" ? (
      <>
        <path d="M-13 6.500H13" />
        <path d="M-17 6.500l6-4v8zM17 6.500l-6-4v8z" fill="#fff" stroke="none" />
      </>
    ) : (
      <>
        <path d="M-13 1h4C-3 1 3 14 9 14h4M-13 14h4C-3 14 3 1 9 1h4" />
        <path d="M-17 1l6-4.500v9zM17 1l-6-4.500v9zM-17 14l6-4.500v9zM17 14l-6-4.500v9z" fill="#fff" stroke="none" />
      </>
    )}
  </g>
);

function TopologyMap() {
  return (
    <MapCanvas viewBox="1784 286 1664 1882" preserveAspectRatio="xMinYMin slice" role="img" aria-label="Network topology">
      <defs>
        <radialGradient id="shade">
          <stop offset="0.4" stopColor="#000" stopOpacity="0.22" />
          <stop offset="0.7" stopColor="#000" stopOpacity="0.07" />
          <stop offset="1" stopColor="#000" stopOpacity="0" />
        </radialGradient>
      </defs>
      {TILES.map((t) => (
        <g key={t.at} transform={t.at} fill="none" strokeLinejoin="round">
          {t.water && <path d={t.water} fill="#fdfdfd" />}
          {t.land && <path d={t.land} fill="#f4f7f6" />}
          <path d={t.urban} fill="#f0edeb" />
          <path d={t.roads} stroke="#e9ecec" strokeWidth="2" vectorEffect="non-scaling-stroke" />
          <path d={t.border} stroke="#b6b8b8" strokeWidth="2" vectorEffect="non-scaling-stroke" />
        </g>
      ))}
      <g fill="#7c7c7c" stroke="#f7f8f8" strokeWidth="3" paintOrder="stroke" textAnchor="middle" fontSize="23">
        {CITIES.map(([name, x, y]) => <text key={name} x={x} y={y + 8}>{name}</text>)}
      </g>
      <g fill="#6c6c6c" stroke="#f7f8f8" strokeWidth="3" paintOrder="stroke" fontSize="46">
        <text x="3400" y="1061">Austria</text>
        <text x="3218" y="1907">San Marino</text>
      </g>
      <g fill="none" stroke="#24b860" strokeWidth="8">
        {LINKS.map((d) => <path key={d} d={d} />)}
      </g>
      {NODES.map(([name, x, y]) => <circle key={name} cx={x} cy={y} r="62" fill="url(#shade)" />)}
      {[[1984, 1101], [1984, 1624]].map(([x, y]) => <circle key={y} cx={x} cy={y} r="51" fill="#000" fillOpacity="0.04" stroke="#b8b8b8" strokeWidth="3" />)}
      <g fill="#fcfcfc" stroke="#d8d8d8" strokeWidth="3">
        {PORTS.map(([x, y], i) => <circle key={i} cx={x} cy={y} r="21" />)}
      </g>
      <g fill="#1a1a1a" textAnchor="middle" fontSize="24">
        {PORTS.map(([x, y, n], i) => n && <text key={i} x={x} y={y + 8}>{n}</text>)}
      </g>
      <g fontFamily="Roboto, sans-serif" fontSize="30" fontWeight="500" textAnchor="middle" fill="#fff">
        {REGENS.map(([x, y]) => (
          <g key={x}>
            <rect x={x - 14} y={y - 14} width="28" height="28" rx="5" fill="#24b860" />
            <text x={x} y={y + 11}>R</text>
          </g>
        ))}
      </g>
      {NODES.map(([name, x, y, kind, color]) => (
        <g key={name} transform={`translate(${x} ${y})`}>
          <circle r="29" fill="#fff" />
          <circle r="25.500" fill={color || "#bd1c1c"} />
          <NodeGlyph kind={kind} />
          <text y="61" textAnchor="middle" fontSize="24" fontWeight="500" fill="#000">{name}</text>
        </g>
      ))}
      {ENDS.map(([name, x, y]) => (
        <g key={name} transform={`translate(${x} ${y})`}>
          <path d="M-27 27V0A27 27 0 1 1 0 27Z" fill="#3d485a" />
          <circle r="22" fill="#f5ae20" />
          <text y="13" textAnchor="middle" fontSize="36" fill="#3d485a">{name}</text>
        </g>
      ))}
    </MapCanvas>
  );
}

/* ---------- form parts ---------- */
function Endpoint({ id, label, value }) {
  return (
    <Field $gap={2}>
      <label htmlFor={id}>{label}<Required>*</Required></label>
      <EndpointRow>
        <SelectWrap $basis="576px">
          <Select id={id} defaultValue={value}><option>{value}</option></Select>
          <ArrowDown />
        </SelectWrap>
        <SquareButton type="button" $width={58} aria-label="Pick on map"><MapPin /></SquareButton>
        <Search>
          <SearchInput placeholder="Select port" aria-label={`${label} port`} />
          <SearchButton type="button" aria-label="Search ports"><Magnifier /></SearchButton>
        </Search>
      </EndpointRow>
    </Field>
  );
}

const COLUMNS = [["Degree", 240], ["Degree Label", 240], ["Equipment Type", 400], ["Name", 400], ["Admin State", 360], ["App", 260]];
const ROWS = [
  ["Omni", "", "NCS2K-200G-CK-C", "3/4/CLIENT", "LOCKED", "NCS"],
  ["Omni", "", "NCS2K-200G-CK-C", "10/4/CLIENT", "LOCKED", "NCS"],
];

function PortsDialog() {
  return (
    <ModalLayer>
      <Modal role="dialog" aria-modal="true" aria-labelledby="ports-title">
        <ModalTitle id="ports-title">Ports</ModalTitle>
        <CloseButton aria-label="Close">
          <svg width="26" height="26" viewBox="0 0 26 26" stroke="#868686" strokeWidth="2.400"><path d="M1 1l24 24M25 1L1 25" /></svg>
        </CloseButton>
        <TableWrap>
          <Table>
            <thead>
              <tr>
                {COLUMNS.map(([name, width]) => (
                  <Th key={name} $width={width} scope="col">
                    <HeadCell>
                      {name}
                      <HeadTools>
                        <IconButton aria-label={`Sort by ${name}`}><SortIcon /></IconButton>
                        <IconButton aria-label={`Filter ${name}`}><FilterIcon /></IconButton>
                      </HeadTools>
                    </HeadCell>
                  </Th>
                ))}
              </tr>
            </thead>
            <tbody>
              {ROWS.map((row) => <tr key={row[3]}>{row.map((cell, i) => <Td key={i}>{cell}</Td>)}</tr>)}
            </tbody>
          </Table>
        </TableWrap>
        <ModalFooter>
          <Button>Cancel</Button>
          <Button disabled>OK</Button>
        </ModalFooter>
      </Modal>
    </ModalLayer>
  );
}

export default function App() {
  return (
    <>
      <Global />
      <Page>
        <Sidebar>
          {NAV.map(([name, Icon]) => (
            <NavItem key={name} href="#" aria-label={name} $active={name === "Services"}><Icon /></NavItem>
          ))}
          <NavSpacer />
          <UserLink href="#" aria-label="Account">
            <svg width="38" height="40" viewBox="0 0 38 40" fill="#fff"><path d="M19 1c5 0 8 4 8 9 0 5-2 8-4 11v3c8 3 14 5 14 14H1c0-9 6-11 14-14v-3c-2-3-4-6-4-11 0-5 3-9 8-9z" /></svg>
          </UserLink>
        </Sidebar>
        <Main>
          <Header>
            <Logo />
            <Title>Service Manager</Title>
            <Clock>04/13/2026, 06:33:09 (UTC+00:00)</Clock>
            <HeaderTools>
              <SquareButton aria-label="Preferences">
                <svg width="24" height="24" viewBox="0 0 24 24" fill="#fff" stroke="#1f1f1f" strokeWidth="2"><path d="M1 4h22M1 12h22M1 20h22" /><circle cx="11" cy="4" r="2.300" /><circle cx="17" cy="12" r="2.300" /><circle cx="7" cy="20" r="2.300" /></svg>
              </SquareButton>
              <SquareButton aria-label="Logs">
                <svg width="28" height="34" viewBox="0 0 28 34" fill="none" stroke="#1f1f1f" strokeWidth="2.600"><path d="M2 2h15l9 9v21H2zM17 2v9h9M7 17h14M7 22h8" /></svg>
              </SquareButton>
            </HeaderTools>
          </Header>
          <Breadcrumb aria-label="Breadcrumb">
            <Crumb href="#">Services</Crumb>
            <span>/</span>
            <Crumb href="#" $current>New OCH-CC service</Crumb>
          </Breadcrumb>
          <Steps>
            <Step $done>
              <StepMark $done><svg width="22" height="20" viewBox="0 0 22 20" fill="none" stroke={BLUE} strokeWidth="2.400"><path d="M1 10l7 8L21 1" /></svg></StepMark>
              General
            </Step>
            <StepLine $done aria-hidden="true" />
            <StepLine aria-hidden="true" />
            <Step><StepMark>5</StepMark>Summary</Step>
          </Steps>
          <Body>
            <FormColumn>
              <Fields>
                <Field $gap={8}>
                  <label htmlFor="client-type">Client Type</label>
                  <SelectWrap>
                    <Select id="client-type" defaultValue="100GE"><option>100GE</option></Select>
                    <ArrowDown />
                  </SelectWrap>
                </Field>
                <Field $gap={8} role="group" aria-labelledby="endpoints">
                  <span id="endpoints">Endpoints</span>
                  <Box>
                    <Endpoint id="endpoint-a" label="Endpoint A" value="Node_1" />
                    <Endpoint id="endpoint-b" label="Endpoint B" value="Node_3" />
                  </Box>
                </Field>
              </Fields>
              <FormFooter>
                <Button type="button">Cancel</Button>
                <FooterGap />
                <Button type="button">Back</Button>
                <Button type="button" $primary>Next</Button>
              </FormFooter>
            </FormColumn>
            <MapArea>
              <TopologyMap />
              <MapTools>
                <ToolRow>
                  <SquareButton aria-label="Refresh">
                    <svg width="26" height="26" viewBox="0 0 26 26" fill="none" stroke="#1f1f1f" strokeWidth="2.200"><path d="M21 6A10.500 10.500 0 1 0 24 13M23 2v6h-6" /></svg>
                  </SquareButton>
                </ToolRow>
                <ToolGroup>
                  <ToolButton aria-label="Zoom in"><svg width="26" height="26" viewBox="0 0 26 26" stroke="#000" strokeWidth="2.600"><path d="M13 1v24M1 13h24" /></svg></ToolButton>
                  <ToolButton aria-label="Zoom out"><svg width="26" height="26" viewBox="0 0 26 26" stroke="#000" strokeWidth="2.600"><path d="M1 13h24" /></svg></ToolButton>
                  <ToolButton aria-label="Fit to screen"><svg width="28" height="28" viewBox="0 0 28 28" fill="none" stroke="#000" strokeWidth="2.600"><path d="M1 1l10 10M27 1L17 11M1 27l10-10M27 27L17 17M11 2v9H2M17 2v9h9M11 26v-9H2M17 26v-9h9" /></svg></ToolButton>
                  <ToolButton aria-label="Unlock"><svg width="28" height="32" viewBox="0 0 28 32" fill="none" stroke="#000" strokeWidth="2.600"><rect x="2" y="11" width="24" height="19" rx="1" /><path d="M9 11V7c0-6 9-7 10-1v2" /></svg></ToolButton>
                </ToolGroup>
                <PinButton aria-label="Add location">
                  <svg width="36" height="44" viewBox="0 0 36 44"><path d="M18 1c10 0 17 7 17 17 0 11-9 16-17 25C10 34 1 29 1 18 1 8 8 1 18 1z" fill="#5c5c5c" /><path d="M18 11v14M11 18h14" stroke="#ececec" strokeWidth="3" /></svg>
                </PinButton>
              </MapTools>
              <Legend type="button">
                Legends
                <svg width="24" height="18" viewBox="0 0 24 18" fill="none" stroke="#1f1f1f" strokeWidth="2.400"><path d="M1 16L12 2l11 14" /></svg>
              </Legend>
              <ThemeSwitch>
                <ThemeButton $on>Light</ThemeButton>
                <ThemeButton>Dark</ThemeButton>
              </ThemeSwitch>
            </MapArea>
          </Body>
          <Mask />
        </Main>
      </Page>
      <PortsDialog />
    </>
  );
}
